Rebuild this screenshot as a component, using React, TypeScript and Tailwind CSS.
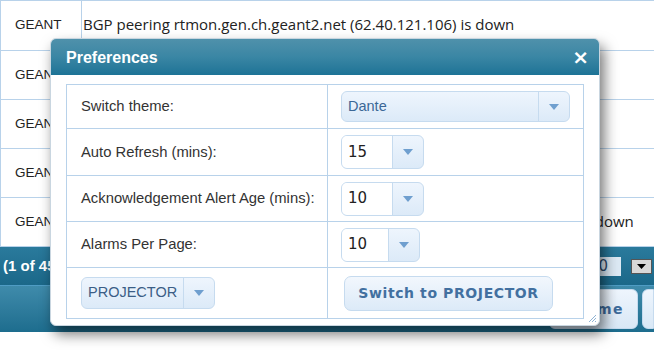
import React from "react";

const arial = { fontFamily: '"Liberation Sans", Arial, sans-serif' };
const dejavu = { fontFamily: '"DejaVu Sans", Verdana, sans-serif' };
const open = { fontFamily: '"Open Sans", "Noto Sans", sans-serif' };

function Arrow() {
  return (
    <svg width="10" height="6" viewBox="0 0 10 6">
      <path d="M0 0 L10 0 L5 6 Z" fill="#6f9fcf" />
    </svg>
  );
}

function Combo({
  value,
  width,
  height,
  split,
  white,
  textClass,
  fontStyle,
}: {
  value: string;
  width: number;
  height: number;
  split: number;
  white?: boolean;
  textClass?: string;
  fontStyle?: React.CSSProperties;
}) {
  return (
    <div
      className="flex rounded-[6px] border border-[#c6dbef] overflow-hidden bg-gradient-to-b from-[#eef5fd] to-[#dceaf8]"
      style={{ width, height }}
    >
      <div
        className={`flex items-center pl-[6px] border-r border-[#c6dbef] ${white ? "bg-white" : ""}`}
        style={{ width: split }}
      >
        <span className={textClass} style={fontStyle}>
          {value}
        </span>
      </div>
      <div className="flex-1 flex items-center justify-center">
        <Arrow />
      </div>
    </div>
  );
}

const rows = [
  "BGP peering rtmon.gen.ch.geant2.net (62.40.121.106) is down",
  "BGP peering rtmon.gen.ch.geant2.net (62.40.121.110) is down",
  "BGP peering rtmon.fra.de.geant2.net (62.40.98.21) is down",
  "BGP peering rtmon.ams.nl.geant2.net (62.40.98.56) is down",
  "BGP peering rtmon.lon2.uk.geant2.net (2001:0798:0014:10aa::a1:0019) is down",
];
const rowH = [50, 49, 49, 49, 49];

export default function App() {
  return (
    <div className="relative w-[654px] h-[353px] overflow-hidden bg-white" style={arial}>
      {/* background page */}
      <div className="flex flex-col">
        <div className="border-t border-l border-[#b8d2ea]">
          {rows.map((r, i) => (
            <div
              key={i}
              className="flex border-b border-[#b8d2ea] text-[#222]"
              style={{ height: rowH[i] }}
            >
              <div className="w-[81px] shrink-0 border-r border-[#b8d2ea] pl-[14px] flex items-center text-[13.5px]">
                GEANT
              </div>
              <div className="pl-[1px] flex items-center whitespace-nowrap -mt-[2px] text-[15px]" style={open}>
                {r}
              </div>
            </div>
          ))}
        </div>
        <div className="h-[39px] bg-gradient-to-b from-[#2a7a9c] to-[#1b6889] flex items-center justify-between pl-[3px] border-b border-[#4f9cc4]">
          <span className="text-white font-bold text-[15px]">(1 of 45)</span>
          <div className="flex items-center gap-[10px] pr-[2px]">
            <div className="h-[19px] w-[36px] bg-[#dce9f4] flex items-center pl-[4px] text-[15px] text-[#2c4a6a]" style={dejavu}>
              10
            </div>
            <div className="w-[21px] h-[15px] bg-[#d8d8d8] border border-[#555] flex items-center justify-center">
              <svg width="9" height="5" viewBox="0 0 9 5">
                <path d="M0 0 L9 0 L4.5 5 Z" fill="#000" />
              </svg>
            </div>
          </div>
        </div>
        <div className="h-[46px] bg-gradient-to-b from-[#3f8bab] to-[#1d6d8e] flex items-center justify-end gap-[4px] pr-0">
          <div className="h-[40px] px-[13px] rounded-[6px] bg-gradient-to-b from-[#eef5fd] to-[#d9e8f6] border border-[#c6dbef] flex items-center font-bold text-[14px] text-[#3d6a9a] tracking-[1.5px]" style={dejavu}>
            Theme
          </div>
          <div className="h-[40px] w-[12px] rounded-l-[6px] bg-gradient-to-b from-[#eef5fd] to-[#d9e8f6] border border-[#c6dbef]" />
        </div>
      </div>

      {/* dialog */}
      <div className="absolute left-[50px] top-[38px] w-[550px] h-[288px] rounded-[6px] bg-white border border-[#c9d6e0] shadow-[4px_8px_14px_rgba(0,0,0,0.55)] overflow-hidden flex flex-col">
        <div className="relative h-[36px] shrink-0 flex items-center justify-between pl-[15px] pr-[10px] bg-gradient-to-b from-[#4f91ab] via-[#3a86a4] to-[#1c7396]">
          <span className="text-white font-bold text-[16px] mt-[2px]">Preferences</span>
          <span className="text-white font-bold text-[20px] leading-none" style={dejavu}>
            ×
          </span>
        </div>
        <div className="relative flex-1 pt-[9px] pl-[15px] pr-[15px]">
          <div className="border border-[#b8d2ea] text-[14.8px] text-[#333]">
            {[
              { label: "Switch theme:", h: 44, ctl: <Combo value="Dante" width={229} height={31} split={197} textClass="text-[14.5px] text-[#3b6796]" /> },
              { label: "Auto Refresh (mins):", h: 47, ctl: <Combo value="15" width={83} height={34} split={51} white textClass="text-[15px] text-[#222]" fontStyle={dejavu} /> },
              { label: "Acknowledgement Alert Age (mins):", h: 46, ctl: <Combo value="10" width={83} height={34} split={51} white textClass="text-[15px] text-[#222]" fontStyle={dejavu} /> },
              { label: "Alarms Per Page:", h: 46, ctl: <Combo value="10" width={79} height={34} split={47} white textClass="text-[15px] text-[#222]" fontStyle={dejavu} /> },
            ].map((r, i) => (
              <div key={i} className="flex border-b border-[#b8d2ea]" style={{ height: r.h }}>
                <div className="w-[261px] shrink-0 border-r border-[#b8d2ea] pl-[14px] flex items-center">
                  {r.label}
                </div>
                <div className="pl-[13px] flex items-center">{r.ctl}</div>
              </div>
            ))}
            <div className="flex h-[50px]">
              <div className="w-[261px] shrink-0 border-r border-[#b8d2ea] pl-[14px] flex items-center">
                <Combo value="PROJECTOR" width={134} height={32} split={102} textClass="text-[14.5px] text-[#3b5e86]" />
              </div>
              <div className="pl-[16px] flex items-center">
                <div className="w-[209px] h-[35px] rounded-[7px] border border-[#c6dbef] bg-gradient-to-b from-[#f2f7fd] to-[#dceaf8] flex items-center justify-center font-bold text-[14px] text-[#4270a0] tracking-[0.6px]" style={dejavu}>
                  Switch to PROJECTOR
                </div>
              </div>
            </div>
          </div>
          <svg className="absolute right-[2px] bottom-[2px]" width="10" height="10" viewBox="0 0 10 10">
            <path d="M9 2 L2 9 M9 5 L5 9 M9 8 L8 9" stroke="#8fb3d4" strokeWidth="1" />
          </svg>
        </div>
      </div>
    </div>
  );
}
